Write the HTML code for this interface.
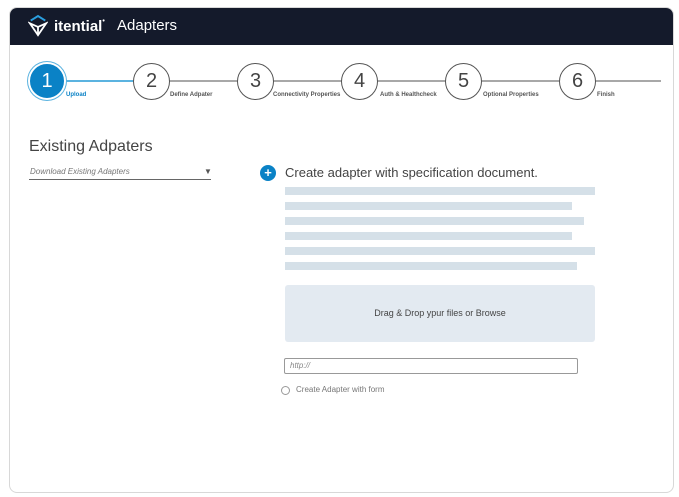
<!DOCTYPE html>
<html><head><meta charset="utf-8"><style>
*{margin:0;padding:0;box-sizing:border-box}
body{width:679px;height:497px;background:#fff;font-family:"Liberation Sans",sans-serif;position:relative;overflow:hidden}
.frame{position:absolute;left:9px;top:7px;width:665px;height:486px;border:1px solid #d8d8d8;border-radius:8px;overflow:hidden}
.hdr{position:absolute;left:0;top:0;right:0;height:37px;background:#141a2b;color:#fff}
.a{position:absolute}
.c{position:absolute;width:37px;height:37px;border:1.3px solid #555;border-radius:50%;background:#fff;text-align:center;line-height:35px;font-size:20px;color:#444;top:63px}
.l{position:absolute;height:2px;background:#a8a8a8;top:80px}
.lb{position:absolute;top:92px;font-size:6px;font-weight:bold;color:#555}
.bar{position:absolute;left:285px;height:8px;background:#d5e0e8}
</style></head><body>
<div class="frame">
<div class="hdr">
<svg class="a" style="left:18px;top:6px" width="20" height="24" viewBox="0 0 22 24"><path d="M3 6 L11 1 L19 6" fill="none" stroke="#2a9fe0" stroke-width="2.2"/><path d="M2 9 L11 22 L20 9 L11 13 Z" fill="none" stroke="#fff" stroke-width="2"/><path d="M11 13 V21" stroke="#fff" stroke-width="2"/></svg>
<div class="a" style="left:44px;top:10px;font-size:15px;font-weight:bold">itential<span style="font-size:7px;vertical-align:top">•</span></div>
<div class="a" style="left:107px;top:9px;font-size:15px">Adapters</div>
</div>
</div>
<div class="l" style="left:66px;width:70px;background:#5bb3e0"></div>
<div class="l" style="left:168px;width:72px"></div>
<div class="l" style="left:272px;width:72px"></div>
<div class="l" style="left:376px;width:72px"></div>
<div class="l" style="left:480px;width:80px"></div>
<div class="l" style="left:594px;width:67px"></div>
<div class="c" style="left:30px;background:#0a82c6;color:#fff;border:2px solid #0a82c6;box-shadow:0 0 0 2px #fff,0 0 0 3px #5bb3e0;width:34px;height:34px;top:64px;line-height:30px">1</div>
<div class="c" style="left:133px">2</div>
<div class="c" style="left:237px">3</div>
<div class="c" style="left:341px">4</div>
<div class="c" style="left:445px">5</div>
<div class="c" style="left:559px">6</div>
<div class="lb" style="left:66px;color:#0a82c6">Upload</div>
<div class="lb" style="left:170px">Define Adpater</div>
<div class="lb" style="left:273px">Connectivity Properties</div>
<div class="lb" style="left:380px">Auth &amp; Healthcheck</div>
<div class="lb" style="left:483px">Optional Properties</div>
<div class="lb" style="left:597px">Finish</div>
<div class="a" style="left:29px;top:138px;font-size:16px;color:#444">Existing Adpaters</div>
<div class="a" style="left:30px;top:167px;font-size:8px;font-style:italic;color:#777">Download Existing Adapters</div>
<div class="a" style="left:204px;top:167px;font-size:8px;color:#555">▼</div>
<div class="a" style="left:29px;top:179px;width:182px;height:1px;background:#666"></div>
<div class="a" style="left:260px;top:165px;width:16px;height:16px;border-radius:50%;background:#0a82c6;color:#fff;font-size:13px;font-weight:bold;text-align:center;line-height:16px">+</div>
<div class="a" style="left:285px;top:165px;font-size:13px;color:#444">Create adapter with specification document.</div>
<div class="bar" style="top:187px;width:310px"></div>
<div class="bar" style="top:202px;width:287px"></div>
<div class="bar" style="top:217px;width:299px"></div>
<div class="bar" style="top:232px;width:287px"></div>
<div class="bar" style="top:247px;width:310px"></div>
<div class="bar" style="top:262px;width:292px"></div>
<div class="a" style="left:285px;top:285px;width:310px;height:57px;background:#e3eaf1;border-radius:3px;text-align:center;line-height:57px;font-size:9px;color:#444">Drag &amp; Drop ypur files or Browse</div>
<div class="a" style="left:284px;top:358px;width:294px;height:16px;border:1px solid #999;border-radius:2px;font-size:8px;font-style:italic;color:#888;padding:2px 5px">http://</div>
<div class="a" style="left:281px;top:386px;width:9px;height:9px;border:1px solid #999;border-radius:50%"></div>
<div class="a" style="left:296px;top:385px;font-size:8px;color:#777">Create Adapter with form</div>
</body></html>
